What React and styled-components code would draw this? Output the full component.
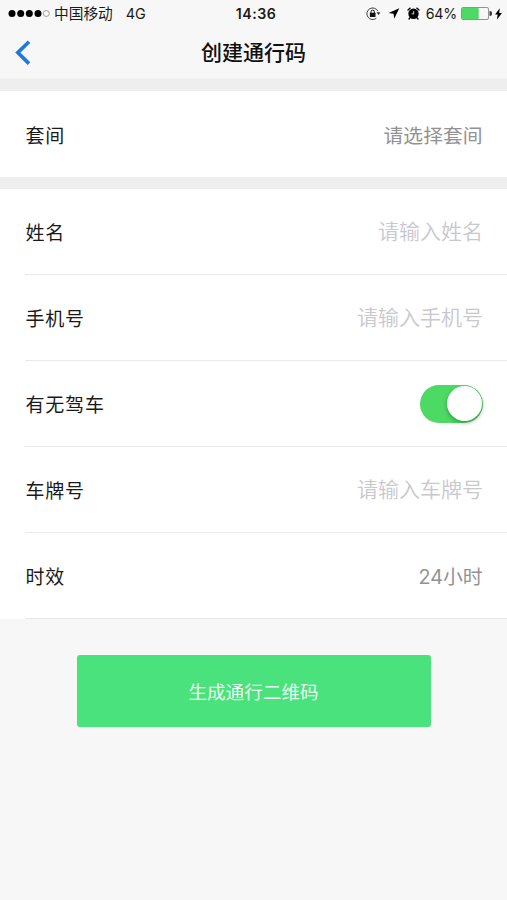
import React, { useState } from "react";
import styled, { createGlobalStyle } from "styled-components";

const GlobalStyle = createGlobalStyle`
  * {
    box-sizing: border-box;
  }
  body {
    margin: 0;
    background: #f7f7f7;
    font-family: Inter, "Noto Sans CJK SC", sans-serif;
    color: #1a1a1a;
  }
`;

const fields = [
  { label: "姓名", value: "请输入姓名", hint: true },
  { label: "手机号", value: "请输入手机号", hint: true },
  { label: "有无驾车", toggle: true },
  { label: "车牌号", value: "请输入车牌号", hint: true },
  { label: "时效", value: "24小时" },
];

const SignalDots = () => (
  <svg width="42" height="10" viewBox="0 0 42 10">
    {[4, 12.7, 21.3, 30].map((x) => (
      <circle key={x} cx={x} cy="4.5" r="3.5" fill="#000" />
    ))}
    <circle cx="38.3" cy="4.5" r="3" fill="none" stroke="#888" strokeWidth="0.8" />
  </svg>
);

const LockIcon = () => (
  <svg width="15" height="14" viewBox="0 0 15 14">
    <path
      d="M11.9 4.2A5.8 5.8 0 1 0 10.4 11.2"
      fill="none"
      stroke="#444"
      strokeWidth="1"
    />
    <path d="M10.4 5.2h4l-1.8 2.8z" fill="#333" />
    <rect x="3.9" y="5.8" width="5.6" height="4.2" rx="0.5" fill="#111" />
    <path d="M5 6V4.8a1.7 1.7 0 0 1 3.4 0V6" fill="none" stroke="#111" strokeWidth="1" />
  </svg>
);

const LocationIcon = () => (
  <svg width="12" height="11" viewBox="0 0 12 11">
    <path d="M11.3 0.2L0.6 5l5 0.7 0.6 5z" fill="#000" />
  </svg>
);

const AlarmIcon = () => (
  <svg width="13" height="13" viewBox="0 0 13 13">
    <circle cx="6.5" cy="6.8" r="5.2" fill="#000" />
    <path
      d="M1 3L3.2 1.1M12 3L9.8 1.1M3.2 10.5L2 12M9.8 10.5L11 12"
      stroke="#000"
      strokeWidth="1.3"
      strokeLinecap="round"
    />
    <path d="M6.7 4v3.1L4.6 6.6" fill="none" stroke="#ddd" strokeWidth="0.9" />
  </svg>
);

const BatteryIcon = () => (
  <svg width="31" height="13" viewBox="0 0 31 13">
    <rect x="0.5" y="0.5" width="27" height="12" rx="1.5" fill="#f7f7f7" stroke="#888" strokeWidth="0.9" />
    <rect x="1" y="1" width="16.7" height="11" rx="0.8" fill="#4cd964" />
    <path d="M28.8 4.3a2.2 2.2 0 0 1 0 4.4z" fill="#333" stroke="#333" strokeWidth="0.5" />
  </svg>
);

const BoltIcon = () => (
  <svg width="7" height="12" viewBox="0 0 7 12">
    <path d="M4.8 0.2L0 6.6h2.7L1.8 11.8 7 4.9H4.2z" fill="#000" />
  </svg>
);

const BackIcon = () => (
  <svg width="17" height="26" viewBox="0 0 17 26">
    <path d="M14 1.8L2.8 12.6 14 23.6" fill="none" stroke="#1b79e0" strokeWidth="3.6" />
  </svg>
);

const App = () => {
  const [driving, setDriving] = useState(true);

  return (
    <Page>
      <GlobalStyle />
      <StatusBar>
        <Carrier>
          <SignalDots />
          <CarrierName>中国移动</CarrierName>
          <span>4G</span>
        </Carrier>
        <Clock>14:36</Clock>
        <Indicators>
          <LockIcon />
          <LocationIcon />
          <AlarmIcon />
          <Percent>64%</Percent>
          <BatteryIcon />
          <BoltIcon />
        </Indicators>
      </StatusBar>
      <NavBar>
        <BackButton aria-label="返回">
          <BackIcon />
        </BackButton>
        <Title>创建通行码</Title>
      </NavBar>

      <Section>
        <Row>
          <Label>套间</Label>
          <Value>请选择套间</Value>
        </Row>
      </Section>
      <Section>
        {fields.map((field) => (
          <Row key={field.label} $line>
            <Label>{field.label}</Label>
            {field.toggle ? (
              <Switch
                role="switch"
                aria-checked={driving}
                aria-label={field.label}
                $on={driving}
                onClick={() => setDriving(!driving)}
              >
                <Knob />
              </Switch>
            ) : (
              <Value $hint={field.hint}>{field.value}</Value>
            )}
          </Row>
        ))}
      </Section>
      <Submit>生成通行二维码</Submit>
    </Page>
  );
};

const Page = styled.div`
  display: flex;
  flex-direction: column;
  min-height: 900px;
  background: #f7f7f7;
`;

const StatusBar = styled.header`
  display: grid;
  grid-template-columns: 1fr auto 1fr;
  align-items: center;
  height: 27px;
  padding: 0 5px 0 8px;
  font-size: 14.4px;
  line-height: 20px;

  svg {
    display: block;
    flex: none;
  }
`;

const Carrier = styled.div`
  display: flex;
  align-items: center;
`;

const CarrierName = styled.span`
  margin: 0 13px 0 4px;
  font-size: 14.7px;
`;

const Clock = styled.span`
  padding-left: 2px;
  font-size: 14.2px;
  font-weight: 600;
  letter-spacing: 0.5px;
`;

const Indicators = styled.div`
  display: flex;
  align-items: center;
  justify-content: flex-end;

  svg + svg {
    margin-left: 7px;
  }
  svg:last-child {
    margin-left: 3px;
  }
`;

const Percent = styled.span`
  margin: 0 4px 0 6px;
  font-size: 14.2px;
  letter-spacing: -0.2px;
`;

const NavBar = styled.nav`
  display: grid;
  grid-template-columns: 60px 1fr 60px;
  align-items: center;
  height: 52px;
  border-bottom: 1px solid #f2f2f2;
`;

const BackButton = styled.button`
  display: flex;
  padding: 0 0 0 15px;
  border: 0;
  background: none;
`;

const Title = styled.h1`
  margin: 0;
  text-align: center;
  font-size: 21px;
  line-height: 50px;
  font-weight: 500;
  color: #111;
`;

const Section = styled.section`
  border-top: 12px solid #eeeeee;
  padding-left: 25px;
  background: #fff;
`;

const Row = styled.div`
  display: flex;
  align-items: center;
  justify-content: space-between;
  height: 86px;
  padding-right: 25px;
  border-bottom: ${({ $line }) => ($line ? "1px solid #e9e9e9" : "0")};
`;

const Label = styled.span`
  padding-left: 0.5px;
  font-size: 19px;
  letter-spacing: 0.8px;
`;

const Value = styled.span`
  padding-bottom: ${({ $hint }) => ($hint ? "3px" : "0")};
  font-size: ${({ $hint }) => ($hint ? "21px" : "19.8px")};
  font-weight: ${({ $hint }) => ($hint ? 350 : 400)};
  color: ${({ $hint }) => ($hint ? "#c8c8cd" : "#929292")};
  margin-right: ${({ $hint }) => ($hint ? "-1px" : "-0.5px")};
`;

const Switch = styled.button`
  display: flex;
  align-items: center;
  justify-content: ${({ $on }) => ($on ? "flex-end" : "flex-start")};
  width: 63px;
  height: 38px;
  margin-right: -1px;
  padding: 1.5px;
  border: 0;
  border-radius: 19px;
  background: ${({ $on }) => ($on ? "#4cd964" : "#e5e5e5")};
`;

const Knob = styled.span`
  width: 35px;
  height: 35px;
  border-radius: 50%;
  background: #fff;
  box-shadow: 0 2px 4px rgba(0, 0, 0, 0.3);
`;

const Submit = styled.button`
  align-self: center;
  width: 354px;
  height: 72px;
  margin-top: 36px;
  padding: 0 6px 2px;
  border: 0;
  border-radius: 3px;
  background: #4ae27d;
  color: #e9fdf0;
  font-family: inherit;
  font-size: 18.6px;
`;

export default App;
